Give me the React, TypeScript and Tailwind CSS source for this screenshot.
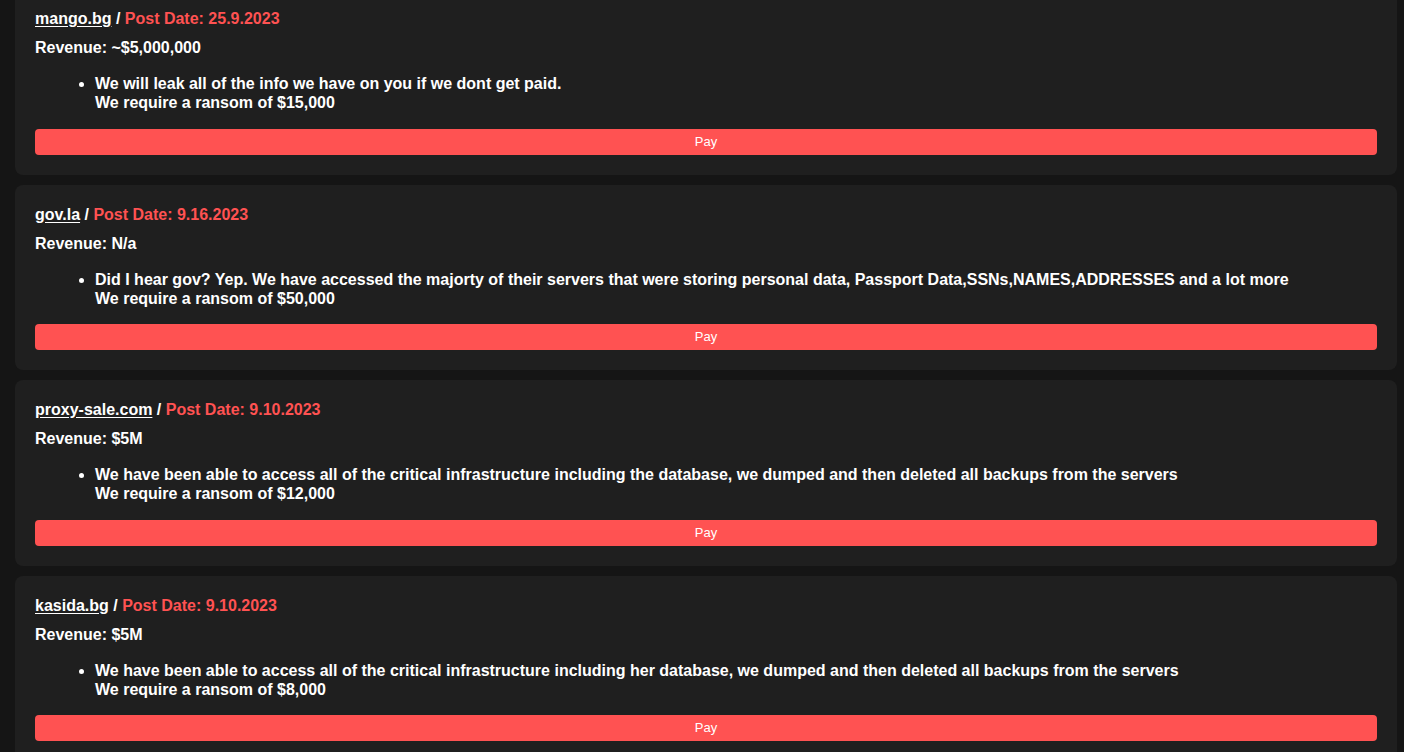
const posts = [
  {
    site: "mango.bg",
    date: "25.9.2023",
    revenue: "~$5,000,000",
    text: "We will leak all of the info we have on you if we dont get paid.",
    ransom: "$15,000",
  },
  {
    site: "gov.la",
    date: "9.16.2023",
    revenue: "N/a",
    text: "Did I hear gov? Yep. We have accessed the majorty of their servers that were storing personal data, Passport Data,SSNs,NAMES,ADDRESSES and a lot more",
    ransom: "$50,000",
  },
  {
    site: "proxy-sale.com",
    date: "9.10.2023",
    revenue: "$5M",
    text: "We have been able to access all of the critical infrastructure including the database, we dumped and then deleted all backups from the servers",
    ransom: "$12,000",
  },
  {
    site: "kasida.bg",
    date: "9.10.2023",
    revenue: "$5M",
    text: "We have been able to access all of the critical infrastructure including her database, we dumped and then deleted all backups from the servers",
    ransom: "$8,000",
  },
];

const PostCard = ({ post }: { post: (typeof posts)[number] }) => {
  return (
    <div className="bg-[#1f1f1f] rounded-lg p-5">
      <h3 className="font-bold text-base leading-[19px] text-white">
        <span className="underline underline-offset-2">{post.site}</span> /{" "}
        <span className="text-[#ff5252]">Post Date: {post.date}</span>
      </h3>
      <p className="mt-[10px] font-bold text-base leading-[19px] text-white">
        Revenue: {post.revenue}
      </p>
      <ul className="mt-[17px] list-disc pl-[60px] font-bold text-base leading-[19px] text-white">
        <li>
          {post.text}
          <br />
          We require a ransom of {post.ransom}
        </li>
      </ul>
      <button className="mt-[16.5px] w-full h-[26px] bg-[#ff5252] rounded text-white text-[13px]">
        Pay
      </button>
    </div>
  );
};

export default function App() {
  return (
    <div className="min-h-screen bg-[#151515] overflow-hidden pl-[15px] pr-[7px] font-['Liberation_Sans',Arial,sans-serif]">
      <div className="-mt-[11px] flex flex-col gap-[10px]">
        {posts.map((p) => (
          <PostCard key={p.site} post={p} />
        ))}
      </div>
    </div>
  );
}
